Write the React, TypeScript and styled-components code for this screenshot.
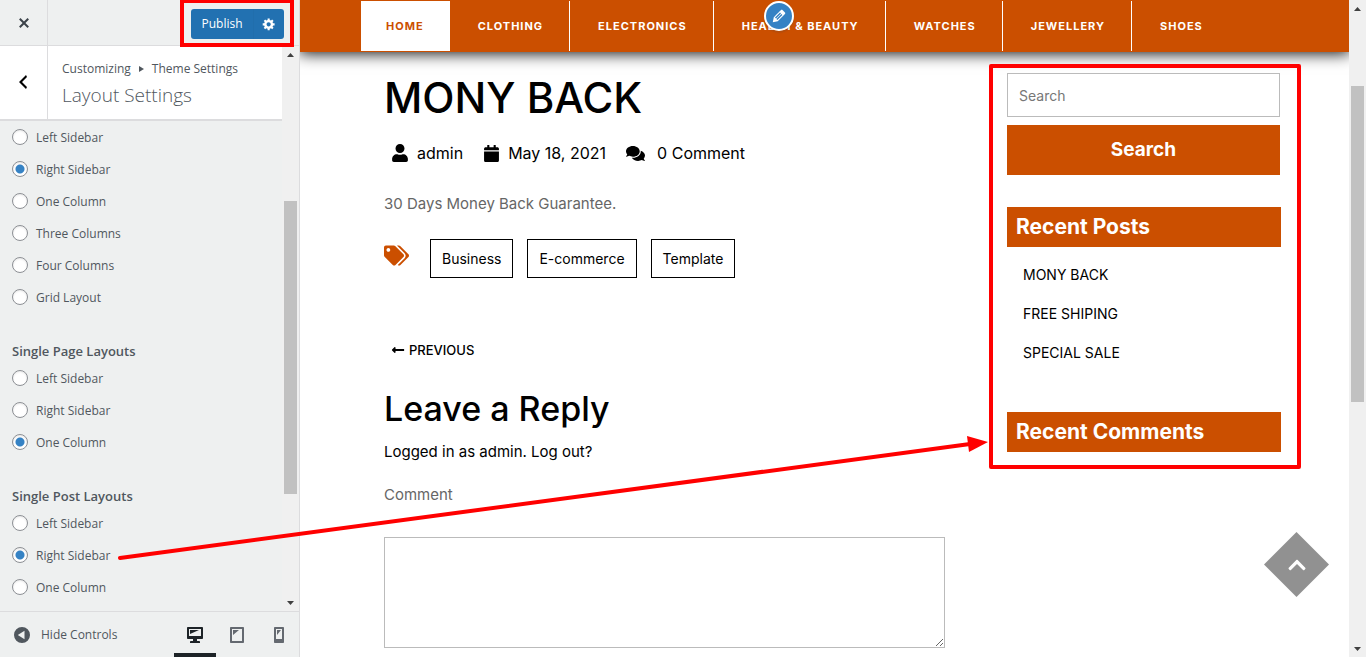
import React from "react";
import styled, { createGlobalStyle, css } from "styled-components";
import { FaUser, FaCalendar, FaComments, FaTags, FaLongArrowAltLeft, FaChevronUp } from "react-icons/fa";

const orange = "#cb4f00";
const uiFont = `"Open Sans", "Noto Sans", sans-serif`;
const bodyFont = `Inter, "Liberation Sans", sans-serif`;

const GlobalStyle = createGlobalStyle`
  *, *::before, *::after { box-sizing: border-box; }
  body { margin: 0; background: #fff; }
  button, input, textarea { font: inherit; color: inherit; margin: 0; border-radius: 0; }
  button { border: 0; padding: 0; background: none; cursor: pointer; }
  a { color: inherit; text-decoration: none; }
  h1, h2, h3, p, ul, fieldset, legend { margin: 0; padding: 0; border: 0; }
  ul { list-style: none; }
`;

const Screen = styled.div`
  position: relative;
  display: flex;
  height: 100vh;
  min-height: 600px;
  overflow: hidden;
`;

/* ---------- scroll bars ---------- */

const Track = styled.div`
  display: flex;
  flex-direction: column;
  flex: none;
  width: 17px;
  padding: 0 2px;
  background: #f0f0f0;
`;

const TrackArrow = styled.svg`
  flex: none;
  width: 13px;
  height: 17px;
  fill: #404040;
`;

const TrackSpace = styled.div<{ $grow: number }>`
  flex: ${(p) => p.$grow} 1 0;
`;

const Thumb = styled(TrackSpace)`
  background: #c1c1c1;
`;

function ScrollBar({ before, thumb, after }: { before: number; thumb: number; after: number }) {
  return (
    <Track aria-hidden="true">
      <TrackArrow viewBox="0 0 13 17"><path d="M3 11h7L6.500 7z" /></TrackArrow>
      <TrackSpace $grow={before} />
      <Thumb $grow={thumb} />
      <TrackSpace $grow={after} />
      <TrackArrow viewBox="0 0 13 17"><path d="M3 7h7L6.500 11z" /></TrackArrow>
    </Track>
  );
}

/* ---------- customizer panel ---------- */

const Panel = styled.aside`
  display: flex;
  flex-direction: column;
  flex: none;
  width: 300px;
  border-right: 1px solid #dcdcde;
  background: #eef0f0;
  color: #50575e;
  font: 12px/20px ${uiFont};
`;

const PanelHeader = styled.header`
  display: flex;
  justify-content: space-between;
  align-items: center;
  flex: none;
  height: 46px;
  padding: 2px 15px 0 0;
  border-bottom: 1px solid #dcdcde;
`;

const SquareButton = styled.button`
  display: flex;
  align-items: center;
  justify-content: center;
  align-self: stretch;
  flex: none;
  width: 48px;
  border-right: 1px solid #dcdcde;
  color: #3c434a;
`;

const CloseButton = styled(SquareButton)`
  margin-top: -2px;
`;

const BackButton = styled(SquareButton)`
  padding: 0 2px 2px 0;
  color: #000;
`;

const Icon = styled.svg<{ $size?: number }>`
  flex: none;
  width: ${(p) => p.$size ?? 20}px;
  height: ${(p) => p.$size ?? 20}px;
  fill: currentColor;
`;

const PublishGroup = styled.div`
  position: relative;
  display: flex;
  height: 30px;
  color: #fff;
`;

const PublishButton = styled.button`
  width: 62px;
  padding-top: 1px;
  border-radius: 3px 0 0 3px;
  background: #2271b1;
`;

const GearButton = styled.button`
  display: flex;
  align-items: center;
  justify-content: center;
  width: 31px;
  border-left: 1px solid #216eac;
  border-radius: 0 3px 3px 0;
  background: #2271b1;
`;

const PublishFrame = styled.span`
  position: absolute;
  inset: -10px -10px -8px -11px;
  border: 4px solid #f00;
  pointer-events: none;
`;

const PanelBody = styled.div`
  display: flex;
  flex: 1;
  min-height: 0;
`;

const Controls = styled.div`
  flex: 1;
  min-width: 0;
  overflow: hidden;
`;

const TitleBar = styled.div`
  display: flex;
  height: 75px;
  border-bottom: 2px solid #dcdcde;
  background: #fff;
`;

const TitleText = styled.div`
  display: flex;
  flex-direction: column;
  gap: 3px;
  padding: 13px 0 0 14px;
`;

const Crumbs = styled.p`
  display: flex;
  align-items: center;
  gap: 8px;
`;

const PanelTitle = styled.h1`
  font-size: 19px;
  line-height: 26px;
  font-weight: 300;
`;

const Group = styled.fieldset`
  min-width: 0;
  padding-left: 12px;

  & + & { margin-top: 28px; }
`;

const GroupTitle = styled.legend`
  height: 21px;
  font-size: 13px;
  line-height: 21px;
  font-weight: 600;
`;

const Choice = styled.label`
  display: flex;
  align-items: center;
  gap: 8px;
  height: 32px;
`;

const ChoiceText = styled.span`
  padding-top: 1px;
`;

const Radio = styled.input`
  appearance: none;
  width: 16px;
  height: 16px;
  border: 1px solid #8c8f94;
  border-radius: 50%;
  background: #fff;
  box-shadow: inset 0 1px 2px rgba(0, 0, 0, 0.1);

  &:checked {
    background: radial-gradient(circle, #3582c4 0 4px, #fff 5px);
  }
`;

const PanelFooter = styled.footer`
  display: flex;
  justify-content: space-between;
  flex: none;
  height: 46px;
  border-top: 1px solid #dcdcde;
`;

const HideButton = styled.button`
  display: flex;
  align-items: center;
  gap: 9px;
  padding: 1px 0 0 12px;
`;

const Devices = styled.div`
  display: flex;
  margin-right: -1px;
`;

const DeviceButton = styled.button<{ $active?: boolean }>`
  display: flex;
  align-items: center;
  justify-content: center;
  width: 42px;
  padding-top: 5px;
  border-bottom: 4px solid ${(p) => (p.$active ? "#1d2327" : "transparent")};
  color: ${(p) => (p.$active ? "#1d2327" : "#646970")};
`;

const glyphs = {
  close: "M14.95 6.46L11.41 10l3.54 3.54-1.41 1.41L10 11.42l-3.53 3.53-1.42-1.42L8.58 10 5.05 6.47l1.42-1.42L10 8.580l3.54-3.53z",
  back: "M14 5l-5 5 5 5-1 2-7-7 7-7z",
  gear: "M18 12h-2.18c-.17.7-.44 1.35-.81 1.93l1.54 1.54-2.1 2.1-1.54-1.54c-.58.36-1.23.63-1.91.79V19H8v-2.18c-.68-.16-1.33-.43-1.91-.79l-1.54 1.54-2.12-2.12 1.54-1.54c-.36-.58-.63-1.23-.79-1.91H1V9.030h2.17c.16-.7.44-1.35.8-1.94L2.43 5.550l2.1-2.1 1.54 1.54c.58-.37 1.24-.64 1.93-.81V2h3v2.180c.68.16 1.33.43 1.91.79l1.54-1.54 2.12 2.12-1.54 1.54c.36.59.64 1.24.8 1.94H18V12zm-8.5 1.5c1.66 0 3-1.34 3-3s-1.34-3-3-3-3 1.34-3 3 1.34 3 3 3z",
  pencil: "M13.89 3.390l2.71 2.72c.46.46.42 1.24.03 1.64l-8.01 8.02-5.56 1.16 1.16-5.58s7.6-7.63 7.99-8.03c.39-.39 1.22-.39 1.68.07zm-2.73 2.79l-5.59 5.61 1.11 1.11 5.54-5.65zm-2.97 8.230l5.58-5.6-1.07-1.08-5.59 5.600z",
  hide: "M10 2a8 8 0 1 0 0 16a8 8 0 0 0 0-16zM12.500 5.800v8.400L5.800 10z",
  desktop: "M3 2h14c.55 0 1 .45 1 1v10c0 .55-.45 1-1 1h-5v2h2c.55 0 1 .45 1 1v1H5v-1c0-.55.45-1 1-1h2v-2H3c-.55 0-1-.45-1-1V3c0-.55.45-1 1-1zm13 9V4H4v7h12zM5 5h9L5 9V5z",
  tablet: "M4 2h12c.55 0 1 .45 1 1v14c0 .55-.45 1-1 1H4c-.55 0-1-.45-1-1V3c0-.55.45-1 1-1zm11 14V4H5v12h10zM6 5h6l-6 5V5z",
  phone: "M6 2h8c.55 0 1 .45 1 1v14c0 .55-.45 1-1 1H6c-.55 0-1-.45-1-1V3c0-.55.45-1 1-1zm7 12V4H7v10h6zM8 5h4l-4 5V5z",
};

function Glyph({ name, size }: { name: keyof typeof glyphs; size?: number }) {
  return (
    <Icon $size={size} viewBox="0 0 20 20" aria-hidden="true">
      <path fillRule="evenodd" d={glyphs[name]} />
    </Icon>
  );
}

function RadioGroup({ title, name, options, value }: { title?: string; name: string; options: string[]; value: string }) {
  return (
    <Group aria-label={title ?? "Blog Layouts"}>
      {title && <GroupTitle>{title}</GroupTitle>}
      {options.map((option) => (
        <Choice key={option}>
          <Radio type="radio" name={name} defaultChecked={option === value} />
          <ChoiceText>{option}</ChoiceText>
        </Choice>
      ))}
    </Group>
  );
}

function Customizer() {
  return (
    <Panel>
      <PanelHeader>
        <CloseButton aria-label="Close"><Glyph name="close" /></CloseButton>
        <PublishGroup>
          <PublishButton>Publish</PublishButton>
          <GearButton aria-label="Publish settings"><Glyph name="gear" size={14} /></GearButton>
          <PublishFrame />
        </PublishGroup>
      </PanelHeader>
      <PanelBody>
        <Controls>
          <TitleBar>
            <BackButton aria-label="Back"><Glyph name="back" /></BackButton>
            <TitleText>
              <Crumbs>
                Customizing
                <svg width="5" height="6" aria-hidden="true"><path d="M0 0v6l5-3z" fill="currentColor" /></svg>
                Theme Settings
              </Crumbs>
              <PanelTitle>Layout Settings</PanelTitle>
            </TitleText>
          </TitleBar>
          <RadioGroup
            name="blog"
            options={["Left Sidebar", "Right Sidebar", "One Column", "Three Columns", "Four Columns", "Grid Layout"]}
            value="Right Sidebar"
          />
          <RadioGroup title="Single Page Layouts" name="page" options={["Left Sidebar", "Right Sidebar", "One Column"]} value="One Column" />
          <RadioGroup title="Single Post Layouts" name="post" options={["Left Sidebar", "Right Sidebar", "One Column"]} value="Right Sidebar" />
        </Controls>
        <ScrollBar before={138} thumb={293} after={100} />
      </PanelBody>
      <PanelFooter>
        <HideButton><Glyph name="hide" />Hide Controls</HideButton>
        <Devices>
          <DeviceButton $active aria-label="Desktop"><Glyph name="desktop" /></DeviceButton>
          <DeviceButton aria-label="Tablet"><Glyph name="tablet" /></DeviceButton>
          <DeviceButton aria-label="Mobile"><Glyph name="phone" /></DeviceButton>
        </Devices>
      </PanelFooter>
    </Panel>
  );
}

/* ---------- site preview ---------- */

const Preview = styled.div`
  position: relative;
  flex: 1;
  min-width: 0;
  overflow: hidden;
  background: #fff;
  color: #000;
  font: 15px/20px ${bodyFont};
`;

const NavBar = styled.nav`
  position: relative;
  display: flex;
  height: 52px;
  padding: 1px 0 1px 61px;
  background: ${orange};
  box-shadow: 0 0 15px 1px #000;
`;

const NavItem = styled.a<{ $active?: boolean }>`
  display: flex;
  align-items: center;
  padding: 0 26px 0 28px;
  border-right: 1px solid #fff;
  color: #fff;
  font-size: 11px;
  font-weight: 700;
  letter-spacing: 1px;
  white-space: nowrap;

  &:last-of-type { border-right: 0; }

  ${(p) => p.$active && css`
    padding: 0 25px;
    background: #fff;
    color: ${orange};
  `}
`;

const EditBadge = styled.button`
  position: absolute;
  top: 1px;
  left: 464px;
  display: flex;
  align-items: center;
  justify-content: center;
  width: 30px;
  height: 30px;
  border: 2px solid #fff;
  border-radius: 50%;
  background: #3582c4;
  color: #fff;
  box-shadow: 0 2px 1px rgba(60, 67, 74, 0.15);
`;

const Columns = styled.div`
  display: grid;
  grid-template-columns: minmax(0, 561fr) minmax(0, 274fr);
  column-gap: 62px;
  align-items: start;
  padding: 21px 68px 0 84px;
`;

const Article = styled.main`
  display: flex;
  flex-direction: column;
`;

const PostTitle = styled.h1`
  font-size: 42px;
  line-height: 50px;
  font-weight: 500;
`;

const Meta = styled.div`
  display: flex;
  align-items: center;
  gap: 20px;
  margin-top: 20px;
  padding-left: 7px;
  font-size: 16px;
`;

const MetaItem = styled.span<{ $gap?: number }>`
  display: flex;
  align-items: center;
  gap: ${(p) => p.$gap ?? 8}px;
`;

const Excerpt = styled.p`
  margin-top: 31px;
  color: #666;
`;

const TagRow = styled.div`
  display: flex;
  align-items: flex-start;
  gap: 14px;
  margin-top: 25px;
`;

const TagIcon = styled(FaTags)`
  width: 25px;
  height: 25px;
  margin: 4px 7px 0 0;
  color: ${orange};
`;

const Tag = styled.a`
  padding: 9px 11px 8px;
  border: 1px solid #000;
  font-size: 14px;
`;

const Previous = styled.a`
  display: flex;
  align-items: center;
  gap: 4px;
  margin-top: 62px;
  padding-left: 7px;
  font-size: 13px;
  font-weight: 500;
`;

const ReplyTitle = styled.h2`
  margin-top: 29px;
  font-size: 34px;
  line-height: 40px;
  font-weight: 500;
`;

const LoggedIn = styled.p`
  margin-top: 13px;
`;

const CommentLabel = styled.label`
  margin-top: 23px;
  color: #666;
`;

const CommentBox = styled.textarea`
  width: 100%;
  height: 111px;
  margin-top: 32px;
  border: 1px solid #bbb;
  resize: both;
`;

const Widgets = styled.aside`
  position: relative;
  display: flex;
  flex-direction: column;
`;

const WidgetFrame = styled.span`
  position: absolute;
  inset: -9px -20px -17px -18px;
  border: 4px solid #f00;
  border-radius: 2px;
  pointer-events: none;
`;

const SearchForm = styled.form`
  display: flex;
  flex-direction: column;
  gap: 8px;
  padding-right: 1px;
`;

const SearchInput = styled.input`
  width: 100%;
  height: 44px;
  padding: 0 11px;
  border: 1px solid #bbb;
  font-size: 14px;

  &::placeholder { color: #777; opacity: 1; }
`;

const SearchButton = styled.button`
  height: 50px;
  background: ${orange};
  color: #fff;
  font-size: 19px;
  font-weight: 700;
`;

const WidgetTitle = styled.h3`
  margin-top: 32px;
  padding: 0 9px;
  background: ${orange};
  color: #fff;
  font-size: 21px;
  line-height: 40px;
  font-weight: 700;
`;

const PostList = styled.ul`
  padding: 8px 16px;
  font-size: 14px;
  line-height: 39px;
`;

const ToTop = styled.a`
  position: absolute;
  right: 20px;
  bottom: 60px;
  width: 65px;
  height: 65px;
  display: flex;
  align-items: center;
  justify-content: center;
  background: #919191;
  clip-path: polygon(50% 0, 100% 50%, 50% 100%, 0 50%);
  color: #fff;
`;

const navItems = ["HOME", "CLOTHING", "ELECTRONICS", "HEALTH & BEAUTY", "WATCHES", "JEWELLERY", "SHOES"];

function Site() {
  return (
    <Preview>
      <NavBar>
        {navItems.map((item, i) => (
          <NavItem key={item} href="#" $active={i === 0}>{item}</NavItem>
        ))}
        <EditBadge aria-label="Edit menu"><Glyph name="pencil" size={18} /></EditBadge>
      </NavBar>
      <Columns>
        <Article>
          <PostTitle>MONY BACK</PostTitle>
          <Meta>
            <MetaItem><FaUser size={18} />admin</MetaItem>
            <MetaItem><FaCalendar size={17} />May 18, 2021</MetaItem>
            <MetaItem $gap={12}><FaComments size={19} />0 Comment</MetaItem>
          </Meta>
          <Excerpt>30 Days Money Back Guarantee.</Excerpt>
          <TagRow>
            <TagIcon />
            <Tag href="#">Business</Tag>
            <Tag href="#">E-commerce</Tag>
            <Tag href="#">Template</Tag>
          </TagRow>
          <Previous href="#"><FaLongArrowAltLeft size={14} />PREVIOUS</Previous>
          <ReplyTitle>Leave a Reply</ReplyTitle>
          <LoggedIn><a href="#">Logged in as admin</a>. <a href="#">Log out?</a></LoggedIn>
          <CommentLabel htmlFor="comment">Comment</CommentLabel>
          <CommentBox id="comment" />
        </Article>
        <Widgets>
          <SearchForm>
            <SearchInput type="text" placeholder="Search" aria-label="Search" />
            <SearchButton type="button">Search</SearchButton>
          </SearchForm>
          <WidgetTitle>Recent Posts</WidgetTitle>
          <PostList>
            <li><a href="#">MONY BACK</a></li>
            <li><a href="#">FREE SHIPING</a></li>
            <li><a href="#">SPECIAL SALE</a></li>
          </PostList>
          <WidgetTitle>Recent Comments</WidgetTitle>
          <WidgetFrame />
        </Widgets>
      </Columns>
      <ToTop href="#" aria-label="Back to top"><FaChevronUp size={20} /></ToTop>
    </Preview>
  );
}

/* ---------- annotation arrow ---------- */

const ArrowLayer = styled.svg`
  position: absolute;
  top: 0;
  left: 0;
  width: 100%;
  height: 100%;
  pointer-events: none;
`;

export default function App() {
  return (
    <>
      <GlobalStyle />
      <Screen>
        <Customizer />
        <Site />
        <ScrollBar before={69} thumb={316} after={238} />
        <ArrowLayer aria-hidden="true">
          <path d="M120 558L970 444" stroke="#f00" strokeWidth="4" strokeLinecap="round" />
          <path d="M988 442L967 436L969 452z" fill="#f00" />
        </ArrowLayer>
      </Screen>
    </>
  );
}
